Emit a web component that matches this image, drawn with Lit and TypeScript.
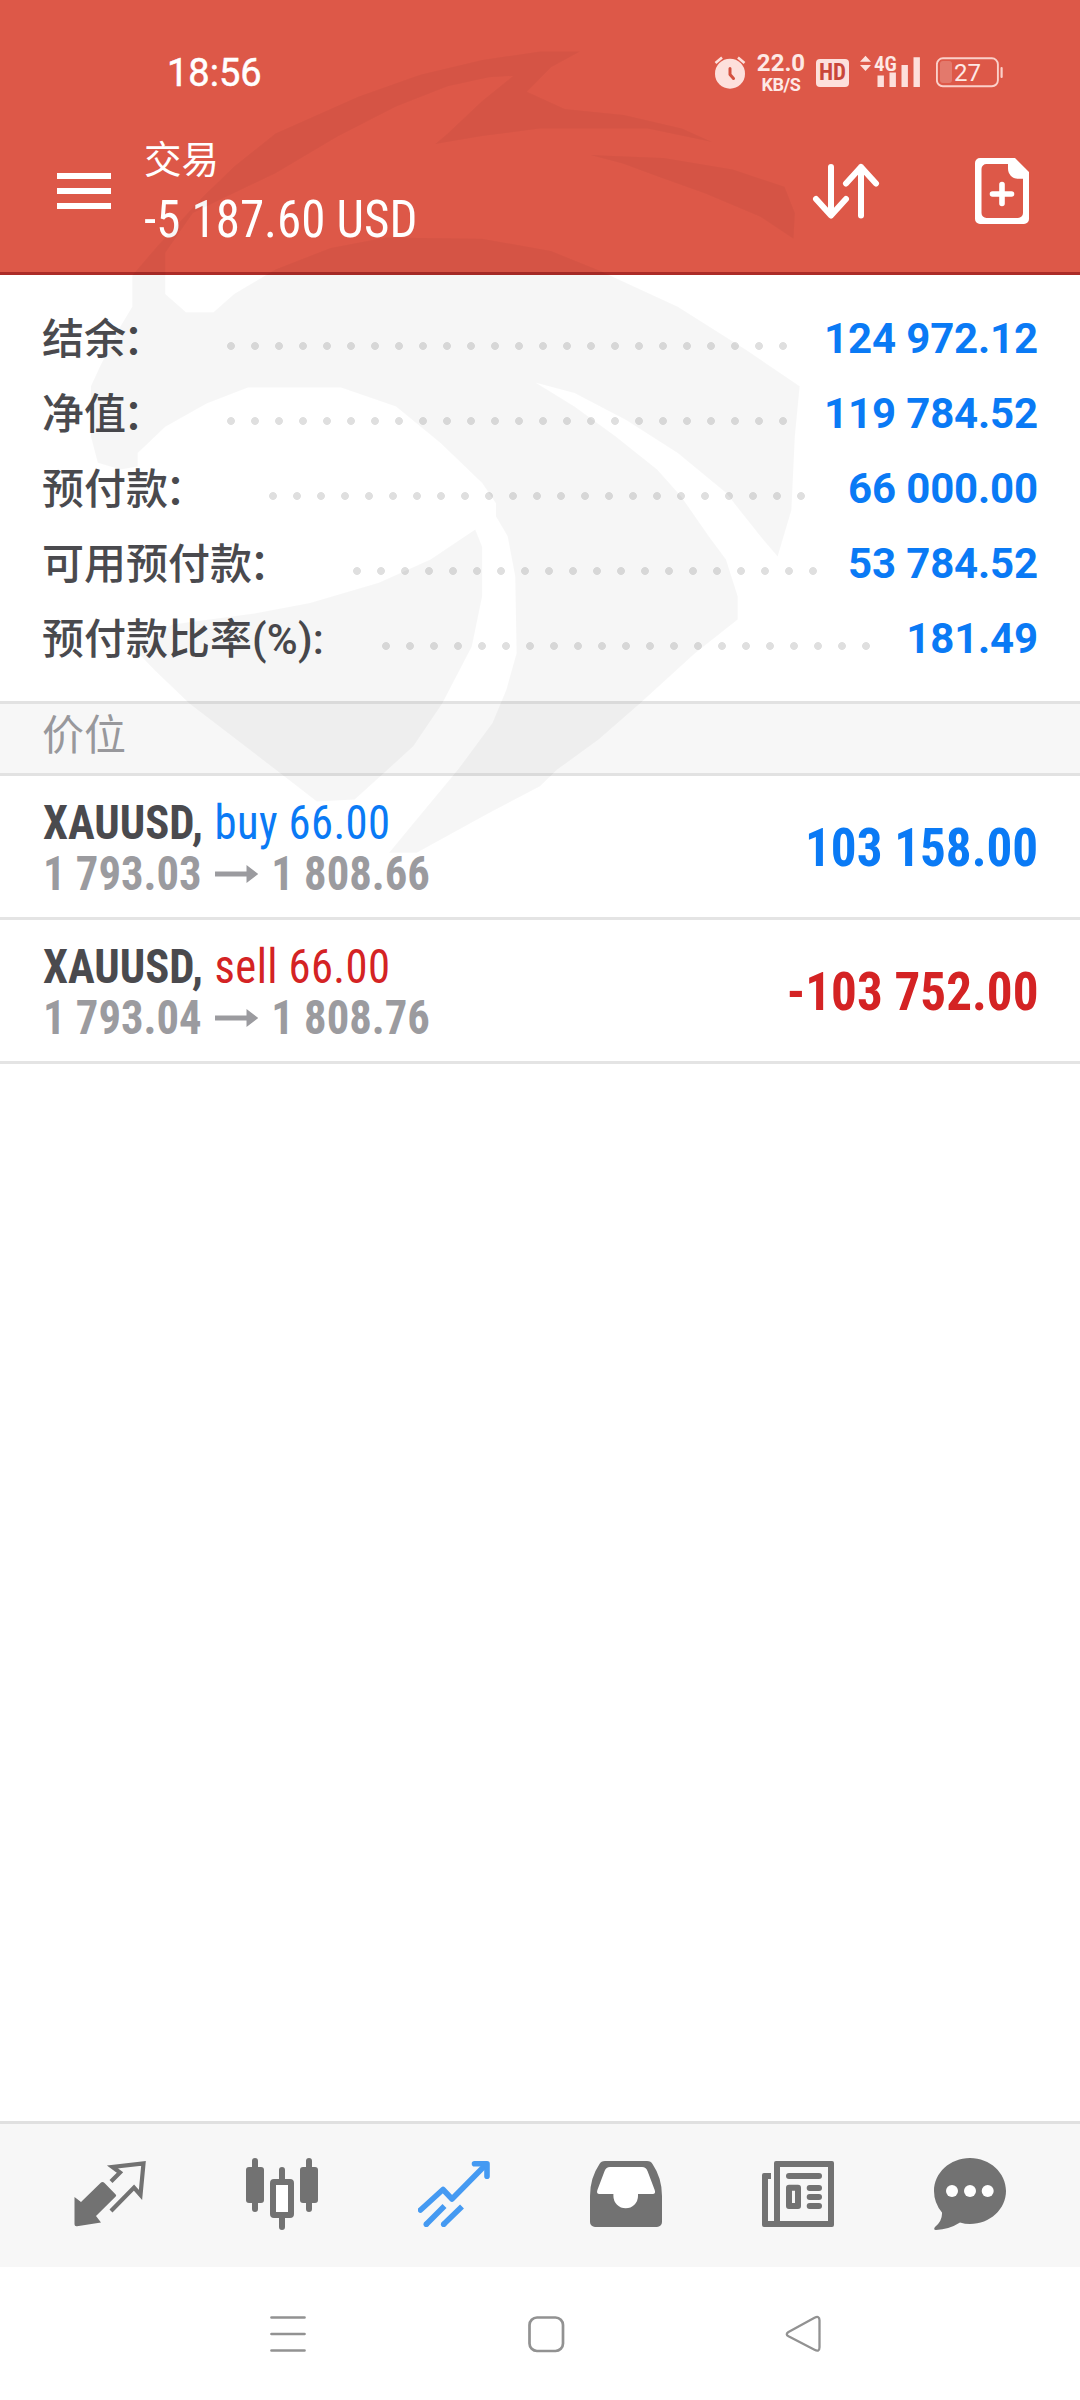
import { LitElement, html, css, svg } from "lit";
import { customElement } from "lit/decorators.js";
import { styleMap } from "lit/directives/style-map.js";

interface SummaryRow { label: string; colon: string; value: string; dots: number; }
interface Position { symbol: string; side: "buy" | "sell"; volume: string; open: string; price: string; profit: string; }

const SUMMARY: SummaryRow[] = [
  { label: "结余", colon: "：", value: "124 972.12", dots: 24 },
  { label: "净值", colon: "：", value: "119 784.52", dots: 24 },
  { label: "预付款", colon: "：", value: "66 000.00", dots: 23 },
  { label: "可用预付款", colon: "：", value: "53 784.52", dots: 20 },
  { label: "预付款比率", colon: "(%):", value: "181.49", dots: 21 },
];

const POSITIONS: Position[] = [
  { symbol: "XAUUSD,", side: "buy", volume: "66.00", open: "1 793.03", price: "1 808.66", profit: "103 158.00" },
  { symbol: "XAUUSD,", side: "sell", volume: "66.00", open: "1 793.04", price: "1 808.76", profit: "-103 752.00" },
];

const base = css`
  :host { display: block; box-sizing: border-box; font-family: Roboto, "Noto Sans CJK SC", sans-serif; }
  * { box-sizing: border-box; }
  svg { display: block; flex: none; }
  .cond { font-family: "Roboto Condensed", Roboto, "Noto Sans CJK SC", sans-serif; white-space: pre; }
`;

@customElement("status-bar")
class StatusBar extends LitElement {
  static styles = [base, css`
    :host { height: 120px; padding: 50px 77px 0 167px; color: #fde9e5; }
    .bar { display: flex; align-items: flex-start; height: 46px; }
    .time { font-size: 38px; line-height: 46px; color: #fff; margin-right: auto; font-weight: 400; -webkit-text-stroke: .5px #fff; }
    .alarm { margin-right: 10px; }
    .speed { display: flex; flex-direction: column; align-items: center; width: 50px; padding-top: 2px; font-weight: 700; margin-right: 10px; }
    .rate { font-size: 24px; line-height: 22px; }
    .unit { font-size: 18px; line-height: 22px; font-weight: 700; letter-spacing: -.4px; }
    .hd { width: 33px; height: 28px; margin: 9px 11px 0 0; border-radius: 4px; background: #fde0dc; color: #c9473a; font-size: 23px; line-height: 28px; font-weight: 700; text-align: center; }
    .net { position: relative; width: 61px; height: 46px; margin-right: 15px; }
    .gen { position: absolute; left: 14px; top: 3px; font-size: 21px; line-height: 22px; font-weight: 600; }
    .battery { position: relative; }
    .level { position: absolute; left: 0; top: 8px; width: 63px; line-height: 30px; font-size: 24px; text-align: center; }
  `];
  render() {
    return html`<div class="bar">
      <span class="time">18:56</span>
      <svg class="alarm" width="32" height="46" viewBox="714 50 32 46">
        <circle cx="730" cy="73.7" r="15" fill="#fde0dc"/>
        <path d="M715.5 63l6.5-5.5M744.5 63l-6.5-5.5" stroke="#fde0dc" stroke-width="2.6" fill="none"/>
        <path d="M730 68.5v6l3.5 4" stroke="#d4503f" stroke-width="3" stroke-linecap="round" stroke-linejoin="round" fill="none"/>
      </svg>
      <div class="speed"><span class="rate">22.0</span><span class="unit">KB/S</span></div>
      <span class="hd cond">HD</span>
      <div class="net">
        <svg width="61" height="46" viewBox="860 50 61 46" fill="#fde0dc">
          <path d="M860 61.8l5.5-6 5.5 6zM860 65h11l-5.5 6z"/>
          <path d="M877.5 75.5h6.4V87h-6.4zM889.5 72.500h6.400V87h-6.400zM901.5 65h6.400v22h-6.400zM913.500 57.300h6.400V87h-6.400z"/>
        </svg>
        <span class="gen cond">4G</span>
      </div>
      <div class="battery">
        <svg width="67" height="46" viewBox="936 50 67 46">
          <rect x="940" y="61" width="12" height="22" rx="3" fill="#fff" fill-opacity=".2"/>
          <rect x="936.900" y="58.300" width="61" height="28" rx="6" fill="none" stroke="#fbd0c9" stroke-width="1.900"/>
          <rect x="1000.500" y="67" width="2.200" height="11" rx="1" fill="#fbd0c9"/>
        </svg>
        <span class="level">27</span>
      </div>
    </div>`;
  }
}

@customElement("trade-header")
class TradeHeader extends LitElement {
  static styles = [base, css`
    :host { height: 155px; padding: 0 51px 0 57px; border-bottom: 3px solid #ab2c28; color: #fff; }
    .row { display: flex; align-items: flex-start; }
    .menu { margin-top: 53px; }
    .titles { display: flex; flex-direction: column; margin: 15px auto 0 33px; }
    .title { font-family: "Noto Sans CJK SC", sans-serif; font-size: 37.500px; line-height: 44px; }
    .sum { font-size: 51px; line-height: 56px; margin-top: 13px; transform: scaleX(.96); transform-origin: 0 50%; }
    .sort { margin: 40px 95px 0 0; }
    .add { margin-top: 38px; }
  `];
  render() {
    return html`<div class="row">
      <svg class="menu" width="54" height="36" viewBox="0 0 54 36"><path d="M0 3h54M0 18h54M0 33h54" stroke="#fff" stroke-width="6"/></svg>
      <div class="titles"><span class="title">交易</span><span class="sum cond">-5 187.60 USD</span></div>
      <svg class="sort" width="68" height="62" viewBox="812 160 68 62" fill="none" stroke="#fff" stroke-width="6" stroke-linecap="round" stroke-linejoin="round">
        <path d="M831 167v48M816 199l15 16.500 15-16.500M861 215.500V167M846 183.500l15-16.500 15 16.500"/>
      </svg>
      <svg class="add" width="54" height="66" viewBox="975 158 54 66">
        <path fill="#fff" fill-rule="evenodd" d="M980 158h35l14 14v47a5 5 0 0 1-5 5h-44a5 5 0 0 1-5-5v-56a5 5 0 0 1 5-5zM1008 164h-21.500a5 5 0 0 0-5 5v44a5 5 0 0 0 5 5h31.500a5 5 0 0 0 5-5v-34.300h-5c-6 0-10-5-10-10z"/>
        <path d="M992.500 194h19M1002 184.500v19" stroke="#fff" stroke-width="5.600" stroke-linecap="round"/>
      </svg>
    </div>`;
  }
}

@customElement("account-summary")
class AccountSummary extends LitElement {
  static styles = [base, css`
    :host { height: 426px; padding: 26px 42px 0 42px; }
    .row { display: flex; align-items: center; height: 75px; }
    .label { font-family: "Noto Sans CJK SC", sans-serif; font-size: 42px; font-weight: 500; line-height: 60px; color: #4a4a4e; white-space: nowrap; margin-top: -5px; }
    .wide { margin-left: -3px; }
    .suffix { font-family: Roboto, sans-serif; letter-spacing: .2px; line-height: 1; }
    .leader { height: 8px; margin: 15px 0 0 54px; background: radial-gradient(circle at 12px 4px, #dfdfdf 3.500px, transparent 4.300px) 0 0 / 24px 8px repeat-x; }
    .suffix-gap { margin-left: 50px; }
    .value { margin-left: auto; font-size: 42px; font-weight: 700; color: #0a7af5; white-space: pre; letter-spacing: -.15px; }
  `];
  render() {
    return SUMMARY.map((r) => {
      const wide = r.colon === "：";
      return html`<div class="row">
      <span class="label">${r.label}<span class=${wide ? "wide" : "suffix"}>${r.colon}</span></span>
      <span class=${wide ? "leader" : "leader suffix-gap"} style=${styleMap({ width: `${r.dots * 24}px` })}></span>
      <span class="value">${r.value}</span>
    </div>`;
    });
  }
}

@customElement("position-row")
class PositionRow extends LitElement {
  static properties = { item: { attribute: false } };
  declare item: Position;
  static styles = [base, css`
    :host { height: 144px; padding: 0 42px 0 43px; border-bottom: 3px solid #e4e4e4; }
    .row { display: flex; align-items: center; height: 141px; }
    .info { display: flex; flex-direction: column; font-size: 47.500px; line-height: 51px; padding-top: 4px; transform: scaleX(.94); transform-origin: 0 50%; }
    .line { display: flex; align-items: center; height: 51px; }
    .symbol { font-weight: 700; color: #4a4a4e; margin-right: 12.500px; }
    .order { letter-spacing: .4px; }
    .prices { font-weight: 700; color: #9b9b9f; }
    .arrow { margin: 0 14px; }
    .buy { color: #0a7af5; }
    .sell { color: #d42324; }
    .profit { margin-left: auto; font-size: 53.500px; font-weight: 700; padding-top: 1px; transform: scaleX(.955); transform-origin: 100% 50%; }
  `];
  render() {
    const p = this.item;
    return html`<div class="row">
      <div class="info">
        <div class="line"><span class="symbol cond">${p.symbol}</span><span class="order cond ${p.side}">${p.side} ${p.volume}</span></div>
        <div class="line prices"><span class="cond">${p.open}</span>
          <svg class="arrow" width="46" height="18" viewBox="0 0 46 18" fill="#9b9b9f"><path d="M0 6.500h33.500V0L46 9l-12.500 9v-6.500H0z"/></svg>
          <span class="cond">${p.price}</span></div>
      </div>
      <span class="profit cond ${p.side}">${p.profit}</span>
    </div>`;
  }
}

const TABS = [
  svg`<path d="M74.500 2197l6.500 5 19.500-19q2-2 4 0l11.200 11.500q1 1 0 2L96 2216l5 6.500-24 3.800q-2.500 .3-2.500-2z"/>
    <path d="M111 2181.500l9-9-7.500-5.500 31-3.500-3 31.500-6.500-7.500-23 23.500" fill="none" stroke="#727272" stroke-width="4.200"/>`,
  svg`<path d="M255 2161v48M309 2161v48M282 2170v10M282 2217v10" stroke="#727272" stroke-width="6" stroke-linecap="round"/>
    <rect x="246" y="2167" width="18" height="36" rx="3"/><rect x="300" y="2167" width="18" height="36" rx="3"/>
    <rect x="273" y="2182" width="18" height="33" rx="1" fill="#fff" stroke="#727272" stroke-width="6"/>`,
  svg`<g fill="none" stroke="#459af2" stroke-width="5.600" stroke-linejoin="round"><path stroke-linecap="round" d="M420.500 2210l22.500-20.500 9 9.500 34-34.500"/><path stroke-linecap="round" d="M474.500 2163.800H487v12.500"/>
    <path d="M444.500 2206l-18.200 18.200M462 2206.500l-18.300 17.700"/></g>
    <g fill="#459af2"><circle cx="426.300" cy="2224.200" r="2.800"/><circle cx="443.700" cy="2224.200" r="2.800"/></g>`,
  svg`<path d="M605 2161h42q4 0 5.500 3q9.500 14 9.500 32v26a5 5 0 0 1-5 5h-62a5 5 0 0 1-5-5v-26q0-18 9.500-32q1.500-3 5.500-3z"/>
    <path fill="#fff" d="M610 2167h32q4 0 5.500 4l7.200 19q1.300 4-2 4H638v2a12.300 12.300 0 0 1-24.600 0v-2h-14q-3.300 0-2-4l7.200-19q1.500-4 5.400-4z"/>`,
  svg`<path fill-rule="evenodd" d="M776 2161h56q2 0 2 2v62q0 2-2 2h-68q-2 0-2-2v-50q0-2 2-2h7v6h-3v42h6v-58q0-2 2-2zM780 2167v54h48v-54z"/>
    <rect x="786" y="2173" width="36" height="6" rx="3"/><path fill-rule="evenodd" d="M789 2184.700h9q3 0 3 3v18.300q0 3-3 3h-9q-3 0-3-3v-18.300q0-3 3-3zM792 2190.700v12.300h3v-12.300z"/>
    <rect x="806.700" y="2185" width="15.300" height="6" rx="3"/><rect x="806.700" y="2194" width="15.300" height="6" rx="3"/><rect x="806.700" y="2203" width="15.300" height="6" rx="3"/>`,
  svg`<path d="M970 2158c20 0 36 15 36 33s-16 33-36 33q-5 0-10-1.500-11 7-24 7.500-3 0-1-3 7.500-6 7-14.500-8-9.500-8-21.500c0-18 16-33 36-33z"/>
    <g fill="#fff"><circle cx="952" cy="2191" r="6"/><circle cx="970" cy="2191" r="6"/><circle cx="987.700" cy="2191" r="6"/></g>`,
];
const TAB_LEFT = [74, 246, 418, 590, 762, 934];

@customElement("tab-bar")
class TabBar extends LitElement {
  static styles = [base, css`
    :host { height: 146px; border-top: 3px solid #e0e0e0; background: #f7f7f7; padding: 32px 74px 0; }
    .tabs { display: flex; justify-content: space-between; }
    .tab { fill: #727272; }
  `];
  render() {
    return html`<div class="tabs">${TABS.map((t, i) => html`<svg class="tab" width="72" height="76" viewBox="${TAB_LEFT[i]} 2156 72 76">${t}</svg>`)}</div>`;
  }
}

@customElement("system-nav")
class SystemNav extends LitElement {
  static styles = [base, css`
    :host { height: 133px; padding: 47px 256px 0 268px; }
    .keys { display: flex; justify-content: space-between; }
    .key { fill: none; stroke: #929292; stroke-width: 2.700; stroke-linecap: round; stroke-linejoin: round; }
  `];
  render() {
    return html`<div class="keys">
      <svg class="key" width="40" height="40" viewBox="268 2314 40 40"><path d="M271.500 2317.500h33M271.500 2334h33M271.500 2350.500h33"/></svg>
      <svg class="key" width="40" height="40" viewBox="526 2314 40 40"><rect x="529.500" y="2317.500" width="33.500" height="33.500" rx="7.500"/></svg>
      <svg class="key" width="40" height="40" viewBox="784 2314 40 40"><path stroke-width="2.300" d="M788.500 2332l26-14.200q5-2.500 5 2.500v27q0 5-5 2.500l-26-13.500q-3.500-2 0-4.300z"/></svg>
    </div>`;
  }
}

@customElement("eagle-watermark")
class EagleWatermark extends LitElement {
  static styles = [base, css`
    :host { position: absolute; left: 0; top: 0; pointer-events: none; }
    .art { fill: #000; fill-opacity: .036; }
  `];
  render() {
    return html`<svg class="art" width="1080" height="960" viewBox="0 0 1080 960"><g transform="scale(.68878 .61225)">
      <path d="M842 84L784 84 700 98 610 122 520 158 400 218 340 272 295 321 230 400 192 450 192 501 175 533 145 599 132 631 132 713 142 756 175 767 200 762 200 740 240 697 300 659 360 633 495 633 575 664 640 724 700 789 720 822 720 843 737 876 748 941 750 1067 735 1127 715 1181 665 1257 600 1345 565 1393 605 1393 710 1328 784 1284 809 1257 869 1208 929 1149 1009 1067 1071 1012 1071 974 1054 914 1029 876 989 811 954 767 894 713 834 664 778 625 834 642 909 686 984 740 1054 805 1104 876 1129 909 1149 833 1154 713 1161 631 1084 572 984 501 899 457 870 442 800 410 700 390 560 388 480 405 400 440 340 480 310 510 270 510 240 480 240 413 280 348 320 326 400 283 490 223 575 174 650 141 710 126 745 124 700 165 650 218 632 235 700 222 784 210 940 210 1034 232 990 210 906 188 820 178 765 150 800 110z"/>
      <path d="M857 253L964 258 1064 277 1139 305 1154 348 1152 390 1104 354 1024 316 954 288 904 267z"/>
      <path d="M690 865L625 914 550 952 450 985 375 1001 250 1020 195 1060 225 1095 275 1149 400 1257 460 1309 515 1306 600 1219 642 1149 685 1056 700 974 700 893z"/>
    </g></svg>`;
  }
}

@customElement("app-root")
class AppRoot extends LitElement {
  static styles = [base, css`
    :host { position: relative; width: 1080px; height: 2400px; background: #fff; overflow: hidden; }
    .page { display: flex; flex-direction: column; height: 2400px; }
    .top { background: #dd5848; }
    .section { height: 75px; padding: 0 42px; border-top: 3px solid #e2e2e2; border-bottom: 3px solid #e2e2e2; background: #f7f7f7; color: #98989c; font: 42px/56px "Noto Sans CJK SC", sans-serif; }
    .spacer { flex: 1; }
  `];
  render() {
    return html`<div class="page">
      <div class="top"><status-bar></status-bar><trade-header></trade-header></div>
      <account-summary></account-summary>
      <div class="section">价位</div>
      ${POSITIONS.map((p) => html`<position-row .item=${p}></position-row>`)}
      <div class="spacer"></div>
      <tab-bar></tab-bar>
      <system-nav></system-nav>
    </div>
    <eagle-watermark></eagle-watermark>`;
  }
}
